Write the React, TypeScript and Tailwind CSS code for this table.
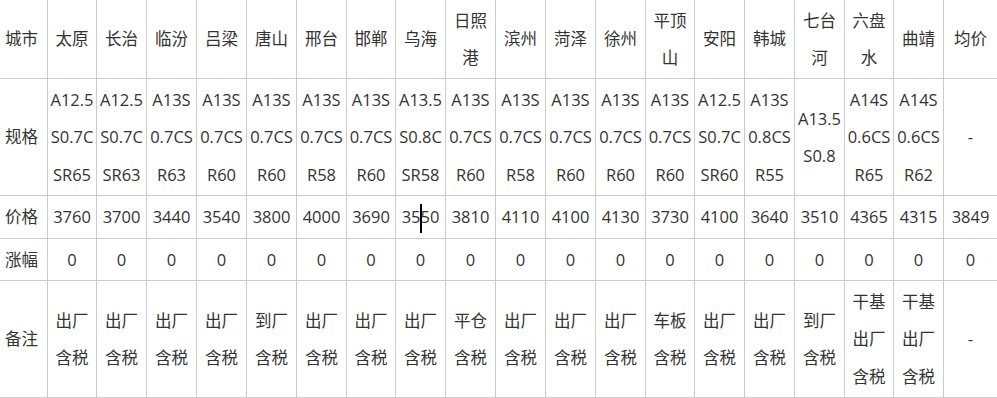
import React from "react";

type Col = {
  city: string[];
  spec: string[];
  price: string;
  change: string;
  note: string[];
};

const cols: Col[] = [
  { city: ["太原"], spec: ["A12.5", "S0.7C", "SR65"], price: "3760", change: "0", note: ["出厂", "含税"] },
  { city: ["长治"], spec: ["A12.5", "S0.7C", "SR63"], price: "3700", change: "0", note: ["出厂", "含税"] },
  { city: ["临汾"], spec: ["A13S", "0.7CS", "R63"], price: "3440", change: "0", note: ["出厂", "含税"] },
  { city: ["吕梁"], spec: ["A13S", "0.7CS", "R60"], price: "3540", change: "0", note: ["出厂", "含税"] },
  { city: ["唐山"], spec: ["A13S", "0.7CS", "R60"], price: "3800", change: "0", note: ["到厂", "含税"] },
  { city: ["邢台"], spec: ["A13S", "0.7CS", "R58"], price: "4000", change: "0", note: ["出厂", "含税"] },
  { city: ["邯郸"], spec: ["A13S", "0.7CS", "R60"], price: "3690", change: "0", note: ["出厂", "含税"] },
  { city: ["乌海"], spec: ["A13.5", "S0.8C", "SR58"], price: "3550", change: "0", note: ["出厂", "含税"] },
  { city: ["日照", "港"], spec: ["A13S", "0.7CS", "R60"], price: "3810", change: "0", note: ["平仓", "含税"] },
  { city: ["滨州"], spec: ["A13S", "0.7CS", "R58"], price: "4110", change: "0", note: ["出厂", "含税"] },
  { city: ["菏泽"], spec: ["A13S", "0.7CS", "R60"], price: "4100", change: "0", note: ["出厂", "含税"] },
  { city: ["徐州"], spec: ["A13S", "0.7CS", "R60"], price: "4130", change: "0", note: ["出厂", "含税"] },
  { city: ["平顶", "山"], spec: ["A13S", "0.7CS", "R60"], price: "3730", change: "0", note: ["车板", "含税"] },
  { city: ["安阳"], spec: ["A12.5", "S0.7C", "SR60"], price: "4100", change: "0", note: ["出厂", "含税"] },
  { city: ["韩城"], spec: ["A13S", "0.8CS", "R55"], price: "3640", change: "0", note: ["出厂", "含税"] },
  { city: ["七台", "河"], spec: ["A13.5", "S0.8"], price: "3510", change: "0", note: ["到厂", "含税"] },
  { city: ["六盘", "水"], spec: ["A14S", "0.6CS", "R65"], price: "4365", change: "0", note: ["干基", "出厂", "含税"] },
  { city: ["曲靖"], spec: ["A14S", "0.6CS", "R62"], price: "4315", change: "0", note: ["干基", "出厂", "含税"] },
  { city: ["均价"], spec: ["-"], price: "3849", change: "0", note: ["-"] },
];

const Cell = ({ lines, first, children }: { lines?: string[]; first?: boolean; children?: React.ReactNode }) => (
  <div
    className={`flex flex-col justify-center border-r border-b border-[#cccccc] whitespace-nowrap ${
      first ? "items-start pl-[5px]" : "items-center"
    }`}
  >
    {children ??
      lines!.map((l, i) => (
        <span key={i}>{l}</span>
      ))}
  </div>
);

// text caret sitting in the 乌海 price cell
const Caret = () => (
  <span className="relative inline-block w-0 h-[29px] align-middle">
    <span className="absolute inset-y-0 -left-px w-[2px] bg-black" />
  </span>
);

export default function App() {
  return (
    <div className="bg-white w-[997px] h-[398px] overflow-hidden">
      <div
        className="grid grid-cols-[48px_49px_50px_50px_50px_50px_50px_49px_50px_50px_50px_50px_50px_49px_50px_50px_50px_49px_50px_54px] grid-rows-[79px_117px_43px_42px_117px] text-[16.5px] leading-[37.5px] text-[#333333]"
        style={{ fontFamily: '"Open Sans", "Noto Sans CJK SC", sans-serif' }}
      >
        <Cell first lines={["城市"]} />
        {cols.map((c, i) => (
          <Cell key={"c" + i} lines={c.city} />
        ))}

        <Cell first lines={["规格"]} />
        {cols.map((c, i) => (
          <Cell key={"s" + i} lines={c.spec} />
        ))}

        <Cell first lines={["价格"]} />
        {cols.map((c, i) =>
          c.city[0] === "乌海" ? (
            <Cell key={"p" + i}>
              <span>
                35
                <Caret />
                50
              </span>
            </Cell>
          ) : (
            <Cell key={"p" + i} lines={[c.price]} />
          )
        )}

        <Cell first lines={["涨幅"]} />
        {cols.map((c, i) => (
          <Cell key={"z" + i} lines={[c.change]} />
        ))}

        <Cell first lines={["备注"]} />
        {cols.map((c, i) => (
          <Cell key={"n" + i} lines={c.note} />
        ))}
      </div>
    </div>
  );
}
